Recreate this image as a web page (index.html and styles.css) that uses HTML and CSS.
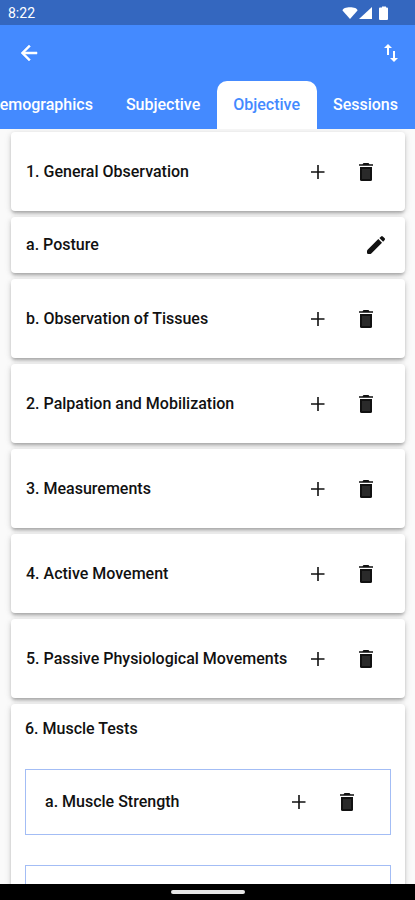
FILE: index.html
```html
<!DOCTYPE html>
<html lang="en">
<head>
<meta charset="utf-8">
<meta name="viewport" content="width=device-width, initial-scale=1">
<title>Objective</title>
<link rel="stylesheet" href="styles.css">
</head>
<body>
<svg class="defs" aria-hidden="true">
  <symbol id="add" viewBox="0 0 24 24"><path d="M18.500 12.800h-5.700v6.200h-1.600v-6.200H5v-1.600h6.200V5h1.600v6.200h5.700z"/></symbol>
  <symbol id="delete" viewBox="0 0 24 24"><path d="M5 4.200h3.500L9.500 3h5l1 1.200H19v1.500H5z"/><path d="M6 7h12v12.500q0 1.500-1.500 1.500h-9Q6 21 6 19.500z"/><path class="shade" d="M8 9h8v10H8z"/></symbol>
  <symbol id="edit" viewBox="0 0 24 24"><path d="M3 18.300q0-.9.600-1.500L14.300 6.100l3.700 3.700L7.300 20.500q-.6.500-1.500.5H4.200Q3 21 3 19.800zM15.400 5l1.700-1.600q.8-.7 1.700 0l1.900 1.900q.7.800 0 1.700L19.100 8.700z"/></symbol>
</svg>
<header class="top">
  <div class="status">
    <span>8:22</span>
    <svg class="status-icons" viewBox="0 0 48 16" aria-hidden="true">
      <path d="M8 14 .5 5.500C.5 1 15.500 1 15.500 5.500z"/>
      <path d="M30 2v12H17z"/>
      <path d="M38 2.500h2V1.500h4v1h1a1 1 0 0 1 1 1v10.500a1 1 0 0 1-1 1h-7a1 1 0 0 1-1-1V3.500a1 1 0 0 1 1-1z"/>
    </svg>
  </div>
  <div class="appbar">
    <button class="icon-btn" aria-label="Back"><svg class="bold" viewBox="0 0 24 24"><path d="M20 11H7.830l5.590-5.590L12 4l-8 8 8 8 1.410-1.410L7.830 13H20v-2z"/></svg></button>
    <button class="icon-btn" aria-label="Reorder"><svg viewBox="0 0 24 24"><path d="M16 17.010V10h-2v7.010h-3L15 21l4-3.990h-3zM9 3 5 6.990h3V14h2V6.990h3L9 3z"/></svg></button>
  </div>
  <nav class="tabs">
    <a class="tab" href="#demographics">Demographics</a>
    <a class="tab" href="#subjective">Subjective</a>
    <a class="tab active" href="#objective" aria-current="page">Objective</a>
    <a class="tab" href="#sessions">Sessions</a>
  </nav>
</header>
<main class="list">
  <section class="card row"><h2>1. General Observation</h2><button class="icon-btn" aria-label="Add"><svg><use href="#add"/></svg></button><button class="icon-btn" aria-label="Delete"><svg><use href="#delete"/></svg></button></section>
  <section class="card row compact"><h2>a. Posture</h2><button class="icon-btn small" aria-label="Edit"><svg><use href="#edit"/></svg></button></section>
  <section class="card row"><h2>b. Observation of Tissues</h2><button class="icon-btn" aria-label="Add"><svg><use href="#add"/></svg></button><button class="icon-btn" aria-label="Delete"><svg><use href="#delete"/></svg></button></section>
  <section class="card row"><h2>2. Palpation and Mobilization</h2><button class="icon-btn" aria-label="Add"><svg><use href="#add"/></svg></button><button class="icon-btn" aria-label="Delete"><svg><use href="#delete"/></svg></button></section>
  <section class="card row"><h2>3. Measurements</h2><button class="icon-btn" aria-label="Add"><svg><use href="#add"/></svg></button><button class="icon-btn" aria-label="Delete"><svg><use href="#delete"/></svg></button></section>
  <section class="card row"><h2>4. Active Movement</h2><button class="icon-btn" aria-label="Add"><svg><use href="#add"/></svg></button><button class="icon-btn" aria-label="Delete"><svg><use href="#delete"/></svg></button></section>
  <section class="card row"><h2>5. Passive Physiological Movements</h2><button class="icon-btn" aria-label="Add"><svg><use href="#add"/></svg></button><button class="icon-btn" aria-label="Delete"><svg><use href="#delete"/></svg></button></section>
  <section class="card group">
    <h2>6. Muscle Tests</h2>
    <div class="box row"><h2>a. Muscle Strength</h2><button class="icon-btn" aria-label="Add"><svg><use href="#add"/></svg></button><button class="icon-btn" aria-label="Delete"><svg><use href="#delete"/></svg></button></div>
    <div class="box row"></div>
  </section>
</main>
<footer class="navbar"><span class="handle"></span></footer>
</body>
</html>
```
FILE: styles.css
```css
* { box-sizing: border-box; }
body {
  margin: 0;
  height: 100vh;
  display: flex;
  flex-direction: column;
  overflow: hidden;
  font: 500 16px/20px Roboto, sans-serif;
  color: #111;
  background: #fafafa;
}
.defs { display: none; }
svg { display: block; fill: currentColor; }
.shade { fill: #2a2a2a; }
.bold { stroke: currentColor; stroke-width: 0.5; }
.top { flex: none; background: #448aff; color: #fff; }
.status {
  height: 25px;
  padding: 0 25px 0 8px;
  display: flex;
  align-items: center;
  justify-content: space-between;
  background: #3467bf;
  font-size: 14px;
  font-weight: 400;
}
.status-icons { width: 48px; height: 16px; }
.appbar {
  height: 56px;
  padding: 0 0 0 5px;
  display: flex;
  align-items: center;
  justify-content: space-between;
}
.icon-btn {
  flex: none;
  width: 48px;
  height: 48px;
  padding: 12px;
  border: 0;
  background: none;
  color: inherit;
}
.icon-btn svg { width: 24px; height: 24px; }
.icon-btn.small { width: 24px; height: 24px; padding: 0; }
.tabs { display: flex; justify-content: flex-end; overflow: hidden; }
.tab {
  flex: none;
  height: 48px;
  padding: 0 17px 0 16px;
  line-height: 48px;
  color: #fff;
  text-decoration: none;
}
.tab.active {
  background: #fff;
  color: #448aff;
  border-radius: 10px 10px 0 0;
}
.list {
  flex: 1;
  min-height: 0;
  overflow: hidden;
  padding: 3px 10px 0 11px;
  display: flex;
  flex-direction: column;
  gap: 6px;
}
h2 { flex: 1; margin: 0; font: inherit; white-space: nowrap; }
.card {
  flex: none;
  background: #fff;
  border-radius: 4px;
  box-shadow: 0 3px 3px -1px rgba(0,0,0,.2), 0 2px 5px rgba(0,0,0,.14), 0 1px 9px rgba(0,0,0,.08);
}
.row { display: flex; align-items: center; min-height: 79px; padding: 0 15px; }
.compact { min-height: 56px; padding-right: 17px; }
.group { padding: 15px 14px; display: flex; flex-direction: column; gap: 30px; }
.box { min-height: 66px; padding: 0 19px; border: 1px solid #a3bdf5; }
.navbar {
  flex: none;
  height: 16px;
  display: flex;
  align-items: center;
  justify-content: center;
  background: #000;
}
.handle { width: 74px; height: 4px; border-radius: 2px; background: #e6e6e6; }
```
